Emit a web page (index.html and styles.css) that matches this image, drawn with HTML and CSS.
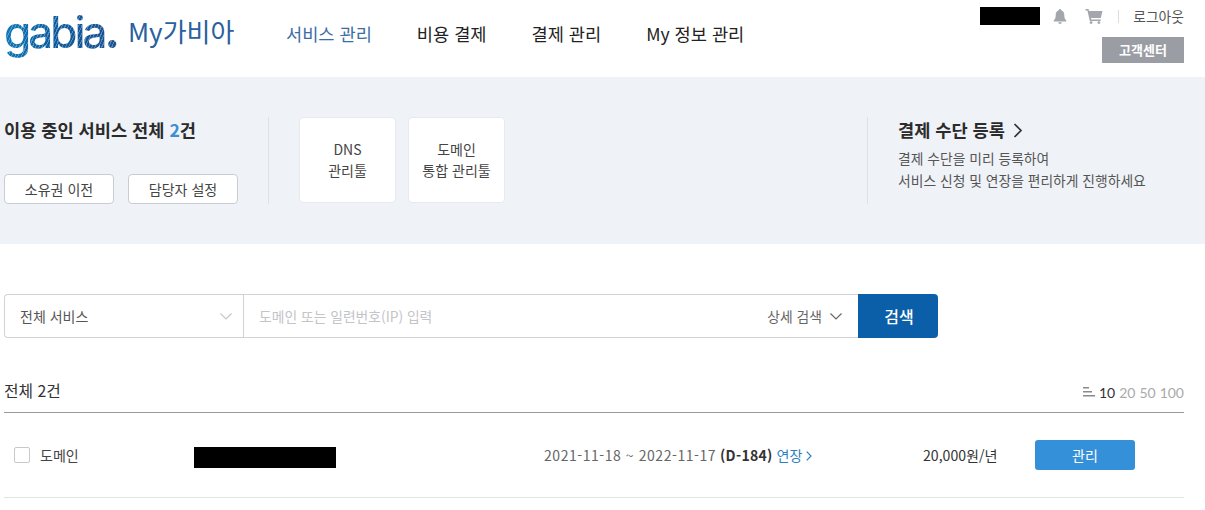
FILE: index.html
```html
<!DOCTYPE html>
<html lang="ko">
<head>
  <meta charset="UTF-8" />
  <title>My가비아</title>
  <link rel="stylesheet" href="styles.css">
</head>
<body>

  <div class="header">
    <div class="logo">gabia<span class="logo-dot">.</span></div>
    <div class="logo-title">My가비아</div>
    <div class="nav">
      <a class="nav-item active">서비스 관리</a>
      <a class="nav-item">비용 결제</a>
      <a class="nav-item">결제 관리</a>
      <a class="nav-item">My 정보 관리</a>
    </div>
    <div class="util">
      <div class="util-top">
        <span class="masked masked-user"></span>
        <svg class="icon-bell" width="14" height="15" viewBox="0 0 14 15"><path fill="#a3a6ab" d="M7 0a1.2 1.2 0 0 1 1.2 1.3C10.3 1.9 11.300 3.600 11.300 6c0 3 .7 4.300 2 5.500v.9H.7v-.9C2 10.300 2.700 9 2.700 6c0-2.400 1-4.100 3.100-4.700A1.200 1.200 0 0 1 7 0zM5.200 13.200h3.600A1.800 1.800 0 0 1 7 15a1.800 1.800 0 0 1-1.800-1.800z"/></svg>
        <svg class="icon-cart" width="18" height="15" viewBox="0 0 17 15"><path fill="#a3a6ab" d="M0 0h3l.6 2H17l-1.700 7H5.400l.3 1.400h9.500V12H4.300L1.900 1.600H0z"/><circle fill="#a3a6ab" cx="5.600" cy="13.600" r="1.400"/><circle fill="#a3a6ab" cx="13.400" cy="13.600" r="1.400"/></svg>
        <span class="util-sep"></span>
        <a class="logout">로그아웃</a>
      </div>
      <a class="help-btn">고객센터</a>
    </div>
  </div>

  <div class="summary">
    <div class="summary-left">
      <h3>이용 중인 서비스 전체 <em>2</em>건</h3>
      <div class="summary-btns">
        <button class="line-btn">소유권 이전</button>
        <button class="line-btn">담당자 설정</button>
      </div>
    </div>
    <div class="tools">
      <a class="tool-card">DNS<br>관리툴</a>
      <a class="tool-card">도메인<br>통합 관리툴</a>
    </div>
    <div class="payment">
      <h3>결제 수단 등록
        <svg width="10" height="15" viewBox="0 0 10 15"><path fill="none" stroke="#333" stroke-width="1.700" d="M1.500 1l6.500 6.500L1.500 14"/></svg>
      </h3>
      <p>결제 수단을 미리 등록하여<br>서비스 신청 및 연장을 편리하게 진행하세요</p>
    </div>
  </div>

  <div class="search">
    <div class="search-select">
      <span>전체 서비스</span>
      <svg width="12" height="7" viewBox="0 0 12 7"><path fill="none" stroke="#c4c7cc" stroke-width="1.200" d="M.5.500L6 6 11.500.500"/></svg>
    </div>
    <div class="search-input">
      <span class="placeholder">도메인 또는 일련번호(IP) 입력</span>
      <span class="search-detail">상세 검색
        <svg width="12" height="7" viewBox="0 0 12 7"><path fill="none" stroke="#666" stroke-width="1.200" d="M.5.500L6 6 11.500.500"/></svg>
      </span>
    </div>
    <button class="search-btn">검색</button>
  </div>

  <div class="list">
    <div class="list-head">
      <span class="list-total">전체 2건</span>
      <div class="page-size">
        <svg width="12" height="10" viewBox="0 0 12 10"><path fill="#8a8a8a" d="M0 0h6v1.500H0zM0 4h9v1.500H0zM0 8h12v1.500H0z"/></svg>
        <b>10</b><span>20</span><span>50</span><span>100</span>
      </div>
    </div>
    <div class="row">
      <span class="check"></span>
      <span class="row-type">도메인</span>
      <span class="masked masked-domain"></span>
      <span class="row-date"><span class="date-range">2021-11-18 ~ 2022-11-17</span> <b>(D-184)</b> <a class="renew">연장
        <svg width="6" height="10" viewBox="0 0 6 10"><path fill="none" stroke="#2f7fc1" stroke-width="1.200" d="M.7.700L5 5 .7 9.300"/></svg></a></span>
      <span class="row-price">20,000원/년</span>
      <button class="manage-btn">관리</button>
    </div>
  </div>

</body>
</html>
```

FILE: styles.css
```css
* { margin: 0; padding: 0; box-sizing: border-box; font-family: "Noto Sans CJK KR", "Noto Sans", sans-serif; }
body { background-color: #fff; color: #333; overflow: hidden; }
a { cursor: pointer; }
button { cursor: pointer; }

.masked { display: block; background-color: #000; }

/* header */
.header { display: flex; height: 77px; padding-left: 4px; }
.logo {
  width: 121px;
  height: 64px;
  font-family: Inter, sans-serif;
  font-size: 44px;
  line-height: 64px;
  letter-spacing: -3px;
  font-weight: 500;
  background:
    repeating-linear-gradient(115deg, rgba(255,255,255,.3) 0 1px, transparent 1px 3px),
    linear-gradient(100deg, #0f7dbd 0%, #0d5b9e 45%, #1f4f8e 100%);
  -webkit-background-clip: text;
  background-clip: text;
  color: transparent;
}
.logo-dot { font-family: Inter, sans-serif; font-weight: 800; }
.logo-title { width: 161px; margin-top: 11px; padding-left: 3px; font-size: 26px; line-height: 40px; color: #2b5f9e; white-space: nowrap; }
.nav { display: flex; gap: 45px; height: 66px; align-items: center; }
.nav-item { font-size: 17.6px; color: #222; white-space: nowrap; }
.nav-item.active { color: #3a6ea5; }
.util { margin-left: auto; padding-right: 21px; display: flex; flex-direction: column; align-items: flex-end; }
.util-top { display: flex; align-items: center; height: 18px; margin-top: 7px; }
.masked-user { width: 60px; height: 18px; }
.icon-bell { margin-left: 13px; }
.icon-cart { margin-left: 18px; }
.util-sep { width: 1px; height: 13px; background-color: #ddd; margin-left: 15px; }
.logout { margin-left: 14px; font-size: 13.800px; color: #555; white-space: nowrap; }
.help-btn {
  width: 82px;
  height: 26px;
  margin-top: 12px;
  background-color: #9a9da3;
  color: #fff;
  font-size: 13px;
  font-weight: 700;
  line-height: 26px;
  text-align: center;
}

/* summary band */
.summary { display: flex; height: 167px; padding: 40px 0 0 4px; background-color: #eff2f7; }
.summary h3 { font-size: 17.6px; font-weight: 700; color: #2b2b2b; line-height: 26px; }
.summary-left { width: 265px; height: 87px; border-right: 1px solid #dfe2e6; }
.summary-left h3 em { font-style: normal; color: #3a8fd0; }
.summary-btns { display: flex; gap: 14px; margin-top: 31px; }
.line-btn {
  width: 110px;
  height: 30px;
  background-color: #fff;
  border: 1px solid #c9ccd1;
  border-radius: 4px;
  font-size: 14px;
  color: #444;
}
.tools { display: flex; gap: 12px; margin-left: 30px; width: 569px; height: 87px; border-right: 1px solid #dfe2e6; }
.tool-card {
  width: 97px;
  height: 86px;
  padding-top: 21px;
  background-color: #fff;
  border: 1px solid #e6e9ee;
  border-radius: 4px;
  font-size: 14px;
  line-height: 21px;
  color: #444;
  text-align: center;
}
.payment { margin-left: 30px; }
.payment h3 { display: flex; align-items: center; gap: 8px; }
.payment p { margin-top: 4px; font-size: 13.800px; line-height: 22px; color: #555; }

/* search */
.search { display: flex; height: 44px; margin: 50px 0 0 4px; width: 934px; }
.search-select {
  display: flex;
  align-items: center;
  justify-content: space-between;
  width: 239px;
  padding: 0 11px 0 15px;
  border: 1px solid #d0d2d6;
  border-right: none;
  border-radius: 4px 0 0 4px;
  font-size: 14px;
  color: #555;
}
.search-input {
  display: flex;
  align-items: center;
  justify-content: space-between;
  flex: 1;
  padding: 0 16px 0 15px;
  border: 1px solid #d0d2d6;
  border-right: none;
  font-size: 14px;
}
.placeholder { color: #c2c4c8; font-size: 13.800px; }
.search-detail { display: flex; align-items: center; gap: 8px; color: #666; font-size: 13.800px; }
.search-btn {
  width: 80px;
  padding-left: 2px;
  background-color: #0b5ea8;
  border: none;
  border-radius: 0 4px 4px 0;
  color: #fff;
  font-size: 16px;
  font-weight: 500;
}

/* list */
.list { margin: 34px 21px 0 4px; }
.list-head { display: flex; justify-content: space-between; align-items: center; height: 41px; border-bottom: 1px solid #999; }
.list-total { font-size: 15.800px; color: #333; margin-top: -3px; }
.page-size { display: flex; align-items: center; gap: 4px; font-family: Lato, sans-serif; font-size: 14px; color: #aaa; }
.page-size b { font-family: Lato, sans-serif; font-weight: 400; color: #333; }
.page-size span { font-family: Lato, sans-serif; }
.row { display: flex; align-items: center; height: 85px; border-bottom: 1px solid #e4e4e4; }
.check { width: 16px; height: 16px; margin-left: 10px; border: 1px solid #c9c9c9; border-radius: 2px; }
.row-type { width: 154px; margin-left: 10px; font-size: 14px; color: #444; }
.masked-domain { width: 142px; height: 21px; margin-top: 4px; }
.row-date { width: 379px; margin-left: 208px; font-size: 14px; color: #666; white-space: nowrap; }
.date-range { letter-spacing: .55px; }
.row-date b { color: #333; font-weight: 700; letter-spacing: .3px; }
.renew { color: #2f7fc1; }
.row-price { width: 112px; font-size: 14.100px; color: #333; }
.manage-btn {
  width: 100px;
  height: 30px;
  background-color: #3590da;
  border: none;
  border-radius: 3px;
  color: #fff;
  font-size: 14px;
}
```
